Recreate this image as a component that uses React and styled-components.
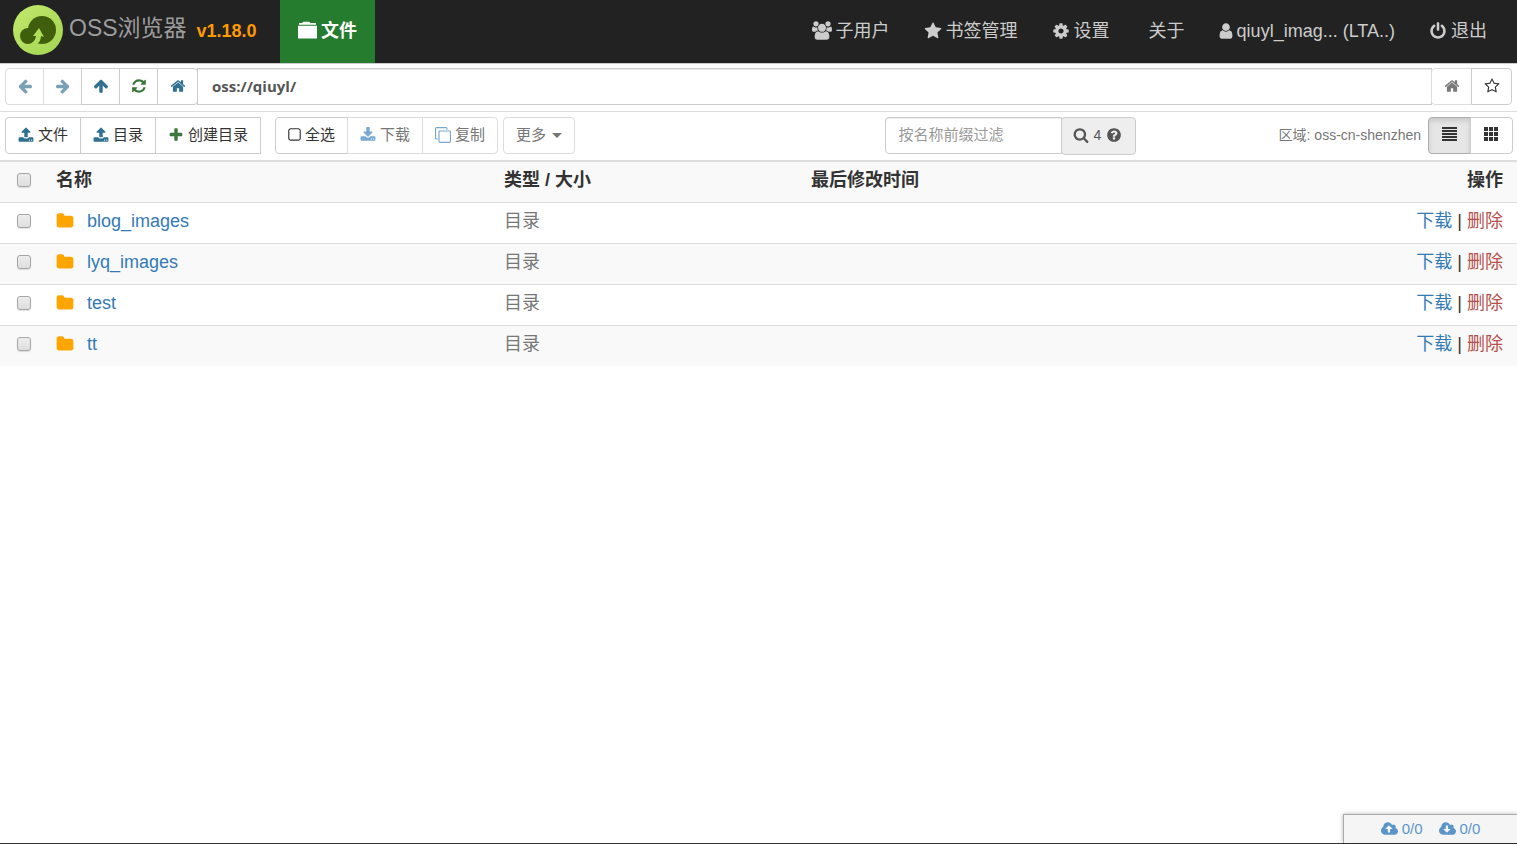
import { useState } from "react";
import styled, { createGlobalStyle, css } from "styled-components";

const ICONS = {
  arrowLeft: "M1664 896v128q0 53-32.5 90.5t-84.5 37.5h-704l293 294q38 36 38 90t-38 90l-75 76q-37 37-90 37-52 0-91-37l-651-652q-37-37-37-90 0-52 37-91l651-650q38-38 91-38 52 0 90 38l75 74q38 38 38 91t-38 91l-293 293h704q52 0 84.5 37.5t32.5 90.5z",
  arrowRight: "M1600 960q0 54-37 91l-651 651q-39 37-91 37-51 0-90-37l-75-75q-38-38-38-91t38-91l293-293h-704q-52 0-84.5-37.5t-32.5-90.5v-128q0-53 32.5-90.5t84.5-37.5h704l-293-294q-38-36-38-90t38-90l75-75q38-38 90-38 53 0 91 38l651 651q37 35 37 90z",
  arrowUp: "M1675 971q0 51-37 90l-75 75q-38 38-91 38-54 0-90-38l-294-293v704q0 52-37.5 84.5t-90.5 32.5h-128q-53 0-90.5-32.5t-37.5-84.5v-704l-294 293q-36 38-90 38t-90-38l-75-75q-38-38-38-90 0-53 38-91l651-651q35-37 90-37 54 0 91 37l651 651q37 39 37 91z",
  refresh: "M1639 1056q0 5-1 7-64 268-268 434.5t-478 166.5q-146 0-282.5-55t-243.5-157l-129 129q-19 19-45 19t-45-19-19-45v-448q0-26 19-45t45-19h448q26 0 45 19t19 45-19 45l-137 137q71 66 161 102t187 36q134 0 250-65t186-179q11-17 53-117 8-23 30-23h192q13 0 22.5 9.5t9.5 22.5zm25-800v448q0 26-19 45t-45 19h-448q-26 0-45-19t-19-45 19-45l138-138q-148-137-349-137-134 0-250 65t-186 179q-11 17-53 117-8 23-30 23h-199q-13 0-22.5-9.5t-9.5-22.5v-7q65-268 270-434.5t480-166.5q146 0 284 55.5t245 156.5l130-129q19-19 45-19t45 19 19 45z",
  home: "M1472 992v480q0 26-19 45t-45 19h-384v-384h-256v384h-384q-26 0-45-19t-19-45v-480q0-1 .5-3t.5-3l575-474 575 474q1 2 1 6zm223-69l-62 74q-8 9-21 11h-3q-13 0-21-7l-692-577-692 577q-12 8-24 7-13-2-21-11l-62-74q-8-10-7-23.5t11-21.5l719-599q32-26 76-26t76 26l244 204v-195q0-14 9-23t23-9h192q14 0 23 9t9 23v408l219 182q10 8 11 21.5t-7 23.5z",
  star: "M1728 647q0 22-26 48l-363 354 86 500q1 7 1 20 0 21-10.5 35.5t-30.5 14.5q-19 0-40-12l-449-236-449 236q-22 12-40 12-21 0-31.5-14.5t-10.5-35.5q0-6 2-20l86-500-364-354q-25-27-25-48 0-37 56-46l502-73 225-455q19-41 49-41t49 41l225 455 502 73q56 9 56 46z",
  starO: "M1201 1004l306-297-422-62-189-382-189 382-422 62 306 297-73 421 378-199 377 199zm527-357q0 22-26 48l-363 354 86 500q1 7 1 20 0 50-41 50-19 0-40-12l-449-236-449 236q-22 12-40 12-21 0-31.5-14.5t-10.5-35.5q0-6 2-20l86-500-364-354q-25-27-25-48 0-37 56-46l502-73 225-455q19-41 49-41t49 41l225 455 502 73q56 9 56 46z",
  upload: "M1344 1472q0-26-19-45t-45-19-45 19-19 45 19 45 45 19 45-19 19-45zm256 0q0-26-19-45t-45-19-45 19-19 45 19 45 45 19 45-19 19-45zm128-224v320q0 40-28 68t-68 28h-1472q-40 0-68-28t-28-68v-320q0-40 28-68t68-28h427q21 56 70.5 92t110.5 36h256q61 0 110.5-36t70.5-92h427q40 0 68 28t28 68zm-325-648q-17 40-59 40h-256v448q0 26-19 45t-45 19h-256q-26 0-45-19t-19-45v-448h-256q-42 0-59-40-17-39 14-69l448-448q18-19 45-19t45 19l448 448q31 30 14 69z",
  download: "M1344 1344q0-26-19-45t-45-19-45 19-19 45 19 45 45 19 45-19 19-45zm256 0q0-26-19-45t-45-19-45 19-19 45 19 45 45 19 45-19 19-45zm128-224v320q0 40-28 68t-68 28h-1472q-40 0-68-28t-28-68v-320q0-40 28-68t68-28h465l135 136q58 56 136 56t136-56l136-136h464q40 0 68 28t28 68zm-325-569q17 41-14 70l-448 448q-18 19-45 19t-45-19l-448-448q-31-29-14-70 17-39 59-39h256v-448q0-26 19-45t45-19h256q26 0 45 19t19 45v448h256q42 0 59 39z",
  plus: "M1600 736v192q0 40-28 68t-68 28h-416v416q0 40-28 68t-68 28h-192q-40 0-68-28t-28-68v-416h-416q-40 0-68-28t-28-68v-192q0-40 28-68t68-28h416v-416q0-40 28-68t68-28h192q40 0 68 28t28 68v416h416q40 0 68 28t28 68z",
  cog: "M1152 896q0-106-75-181t-181-75-181 75-75 181 75 181 181 75 181-75 75-181zm512-109v222q0 12-8 23t-20 13l-185 28q-19 54-39 91 35 50 107 138 10 12 10 25t-9 23q-27 37-99 108t-94 71q-12 0-26-9l-138-108q-44 23-91 38-16 136-29 186-7 28-36 28h-222q-14 0-24.5-8.5t-11.5-21.5l-28-184q-49-16-90-37l-141 107q-10 9-25 9-14 0-25-11-126-114-165-168-7-10-7-23 0-12 8-23 15-21 51-66.5t54-70.5q-27-50-41-99l-183-27q-13-2-21-12.5t-8-23.5v-222q0-12 8-23t19-13l186-28q14-46 39-92-40-57-107-138-10-12-10-24 0-10 9-23 26-36 98.5-107.5t94.5-71.5q13 0 26 10l138 107q44-23 91-38 16-136 29-186 7-28 36-28h222q14 0 24.5 8.5t11.5 21.5l28 184q49 16 90 37l142-107q9-9 24-9 13 0 25 10 129 119 165 170 7 8 7 22 0 12-8 23-15 21-51 66.5t-54 70.5q26 50 41 98l183 28q13 2 21 12.5t8 23.5z",
  power: "M1664 896q0 156-61 298t-164 245-245 164-298 61-298-61-245-164-164-245-61-298q0-182 80.5-343t226.5-270q43-32 95.5-25t83.5 50q32 42 24.5 94.5t-49.5 84.5q-98 74-151.5 181t-53.5 228q0 104 40.5 198.5t109.5 163.5 163.5 109.5 198.5 40.5 198.5-40.5 163.5-109.5 109.5-163.5 40.5-198.5q0-121-53.5-228t-151.5-181q-42-32-49.5-84.5t24.5-94.5q31-43 84-50t95 25q146 109 226.5 270t80.5 343zm-640-768v640q0 52-38 90t-90 38-90-38-38-90v-640q0-52 38-90t90-38 90 38 38 90z",
  user: "M1536 1399q0 109-62.5 187t-150.5 78h-854q-88 0-150.5-78t-62.5-187q0-85 8.5-160.5t31.5-152 58.5-131 94-89 134.5-34.5q131 128 313 128t313-128q76 0 134.5 34.5t94 89 58.5 131 31.5 152 8.5 160.5zm-256-887q0 159-112.5 271.5t-271.5 112.5-271.5-112.5-112.5-271.5 112.5-271.5 271.5-112.5 271.5 112.5 112.5 271.5z",
  users: "M657 896q-162 5-265 128h-134q-82 0-138-40.5t-56-118.5q0-353 124-353 6 0 43.5 21t97.5 42.5 119 21.5q67 0 133-23-5 37-5 66 0 139 81 256zm1071 637q0 120-73 189.5t-194 69.5h-874q-121 0-194-69.5t-73-189.5q0-53 3.5-103.5t14-109 26.5-108.5 43-97.5 62-81 85.5-53.5 111.5-20q10 0 43 21.5t73 48 107 48 135 21.5 135-21.5 107-48 73-48 43-21.5q61 0 111.5 20t85.5 53.5 62 81 43 97.5 26.5 108.5 14 109 3.5 103.5zm-1024-1277q0 106-75 181t-181 75-181-75-75-181 75-181 181-75 181 75 75 181zm704 384q0 159-112.5 271.5t-271.5 112.5-271.5-112.5-112.5-271.5 112.5-271.5 271.5-112.5 271.5 112.5 112.5 271.5zm576 225q0 78-56 118.5t-138 40.5h-134q-103-123-265-128 81-117 81-256 0-29-5-66 66 23 133 23 59 0 119-21.5t97.5-42.5 43.5-21q124 0 124 353zm-128-609q0 106-75 181t-181 75-181-75-75-181 75-181 181-75 181 75 75 181z",
  folder: "M1728 608v704q0 92-66 158t-158 66h-1216q-92 0-158-66t-66-158v-960q0-92 66-158t158-66h320q92 0 158 66t66 158v32h672q92 0 158 66t66 158z",
  square: "M1312 256h-832q-66 0-113 47t-47 113v832q0 66 47 113t113 47h832q66 0 113-47t47-113v-832q0-66-47-113t-113-47zm288 160v832q0 119-84.5 203.5t-203.5 84.5h-832q-119 0-203.5-84.5t-84.5-203.5v-832q0-119 84.5-203.5t203.5-84.5h832q119 0 203.5 84.5t84.5 203.5z",
  clone: "M1664 1632v-1088q0-13-9.5-22.5t-22.5-9.5h-1088q-13 0-22.5 9.5t-9.5 22.5v1088q0 13 9.5 22.5t22.5 9.5h1088q13 0 22.5-9.5t9.5-22.5zm128-1088v1088q0 66-47 113t-113 47h-1088q-66 0-113-47t-47-113v-1088q0-66 47-113t113-47h1088q66 0 113 47t47 113zm-384-384v160h-128v-160q0-13-9.5-22.5t-22.5-9.5h-1088q-13 0-22.5 9.5t-9.5 22.5v1088q0 13 9.5 22.5t22.5 9.5h160v128h-160q-66 0-113-47t-47-113v-1088q0-66 47-113t113-47h1088q66 0 113 47t47 113z",
  search: "M1216 832q0-185-131.5-316.5t-316.5-131.5-316.5 131.5-131.5 316.5 131.5 316.5 316.5 131.5 316.5-131.5 131.5-316.5zm512 832q0 52-38 90t-90 38q-54 0-90-38l-343-342q-179 124-399 124-143 0-273.5-55.5t-225-150-150-225-55.5-273.5 55.5-273.5 150-225 225-150 273.5-55.5 273.5 55.5 225 150 150 225 55.5 273.5q0 220-124 399l343 343q37 37 37 90z",
  question: "M1024 1376v-192q0-14-9-23t-23-9h-192q-14 0-23 9t-9 23v192q0 14 9 23t23 9h192q14 0 23-9t9-23zm256-672q0-88-55.5-163t-138.5-116-170-41q-243 0-371 213-15 24 8 42l132 100q7 6 19 6 16 0 25-12 53-68 86-92 34-24 86-24 48 0 85.5 26t37.5 59q0 38-20 61t-68 45q-63 28-115.5 86.5t-52.5 125.5v36q0 14 9 23t23 9h192q14 0 23-9t9-23q0-19 21.5-49.5t54.5-49.5q32-18 49-28.5t46-35 44.5-48 28-60.5 12.5-81zm384 192q0 209-103 385.5t-279.5 279.5-385.5 103-385.5-103-279.5-279.5-103-385.5 103-385.5 279.5-279.5 385.5-103 385.5 103 279.5 279.5 103 385.5z",
  cloudUp: "M1344 864q0-14-9-23l-352-352q-9-9-23-9t-23 9l-351 351q-10 12-10 24 0 14 9 23t23 9h224v352q0 13 9.5 22.5t22.5 9.5h192q13 0 22.5-9.5t9.5-22.5v-352h224q13 0 22.5-9.5t9.5-22.5zm640 288q0 159-112.5 271.5t-271.5 112.5h-1088q-185 0-316.5-131.5t-131.5-316.5q0-130 70-240t188-165q-2-30-2-43 0-212 150-362t362-150q156 0 285.5 87t188.5 231q71-62 166-62 106 0 181 75t75 181q0 76-41 138 130 31 213.5 135.5t83.5 238.5z",
  cloudDown: "M1344 928q0-14-9-23t-23-9h-224v-352q0-13-9.5-22.5t-22.5-9.5h-192q-13 0-22.5 9.5t-9.5 22.5v352h-224q-13 0-22.5 9.5t-9.5 22.5q0 14 9 23l352 352q9 9 23 9t23-9l351-351q10-12 10-24zm640 224q0 159-112.5 271.5t-271.5 112.5h-1088q-185 0-316.5-131.5t-131.5-316.5q0-130 70-240t188-165q-2-30-2-43 0-212 150-362t362-150q156 0 285.5 87t188.5 231q71-62 166-62 106 0 181 75t75 181q0 76-41 138 130 31 213.5 135.5t83.5 238.5z",
  tab: "M0 450h1792v1200h-1792zM90 360v-90q0-70 70-70h230l110-130h560l110 130h460q70 0 70 70v90z",
  list: "M0 0h15v2h-15zM0 3h15v2h-15zM0 6h15v2h-15zM0 9h15v2h-15zM0 12h15v2h-15z",
  grid: "M0 0h4v4h-4zM5 0h4v4h-4zM10 0h4v4h-4zM0 5h4v4h-4zM5 5h4v4h-4zM10 5h4v4h-4zM0 10h4v4h-4zM5 10h4v4h-4zM10 10h4v4h-4z",
};

// glyphs that do not fill the usual square box: [viewBox, width offset]
const BOXES = {
  users: ["64 0 1920 1792", 1],
  cloudUp: ["64 0 1920 1792", 1],
  cloudDown: ["64 0 1920 1792", 1],
  user: ["200 0 1394 1792", -4],
  square: ["168 0 1456 1792", -3],
  list: ["0 0 15 15", 0],
  grid: ["0 0 15 15", 0],
};

const FILES = ["blog_images", "lyq_images", "test", "tt"];

function Icon ({name, size = 16, color}) {
  const [box, offset] = BOXES[name] || ["0 0 1792 1792", 0];
  return (
    <IconSvg viewBox={box} $width={size + offset} $height={size} $color={color} aria-hidden="true">
      <path d={ICONS[name]} />
    </IconSvg>
  )
}

function Logo () {
  return (
    <LogoSvg viewBox="0 0 50 50" aria-hidden="true">
      <defs>
        <linearGradient id="logoFill" x1="0" y1="0" x2="1" y2="1">
          <stop offset="0" stopColor="#C3E86C" />
          <stop offset="1" stopColor="#A2D552" />
        </linearGradient>
      </defs>
      <circle cx="25" cy="25" r="25" fill="url(#logoFill)" />
      <circle cx="29" cy="25" r="14" fill="#3F5F0C" />
      <circle cx="15" cy="31" r="8" fill="#3F5F0C" />
      <path d="M26 23l5 9-3-1q0 5-4 8h-7q5-2 6-8h-3z" fill="#AFDD5C" />
    </LogoSvg>
  )
}

function App () {
  const [checked, setChecked] = useState([]);
  const [path, setPath] = useState("oss://qiuyl/");
  const [filter, setFilter] = useState("");
  const [view, setView] = useState("list");

  const isAll = checked.length === FILES.length;

  const toggleAll = () => setChecked(isAll ? [] : FILES);
  const toggle = (name) => {
    setChecked(current => current.includes(name) ? current.filter(v => v !== name) : [...current, name]);
  }

  return (
    <Page>
      <GlobalStyle />
      <Header>
        <Brand>
          <Logo />
          <BrandName>OSS浏览器</BrandName>
          <Version>v1.18.0</Version>
        </Brand>
        <Tab href="#files"><Icon name="tab" size={19} />文件</Tab>
        <Nav>
          <NavLink href="#users"><Icon name="users" size={19} />子用户</NavLink>
          <NavLink href="#bookmarks"><Icon name="star" size={18} />书签管理</NavLink>
          <NavLink href="#settings"><Icon name="cog" size={18} />设置</NavLink>
          <NavLink href="#about" $plain>关于</NavLink>
          <NavLink href="#account"><Icon name="user" size={18} />qiuyl_imag... (LTA..)</NavLink>
          <NavLink href="#logout"><Icon name="power" size={18} />退出</NavLink>
        </Nav>
      </Header>

      <AddressBar>
        <Group>
          <Button $width={39} disabled aria-label="后退"><Icon name="arrowLeft" color="#31708F" /></Button>
          <Button $width={39} disabled aria-label="前进"><Icon name="arrowRight" color="#31708F" /></Button>
          <Button $width={39} aria-label="上级"><Icon name="arrowUp" color="#31708F" /></Button>
          <Button $width={39} aria-label="刷新"><Icon name="refresh" color="#3C763D" /></Button>
          <Button $width={41} aria-label="首页"><Icon name="home" color="#31708F" /></Button>
        </Group>
        <AddressInput aria-label="地址" value={path} onChange={e => setPath(e.target.value)} />
        <Group>
          <Button $width={41} disabled aria-label="设为首页"><Icon name="home" color="#333333" /></Button>
          <Button $width={41} aria-label="收藏"><Icon name="starO" /></Button>
        </Group>
      </AddressBar>

      <Toolbar>
        <Group $flatEnd>
          <Button><Icon name="upload" color="#31708F" />文件</Button>
          <Button><Icon name="upload" color="#31708F" />目录</Button>
          <Button><Icon name="plus" color="#3C763D" />创建目录</Button>
        </Group>
        <ActionGroups>
          <Group>
            <Button onClick={toggleAll}><Icon name="square" />全选</Button>
            <Button disabled><Icon name="download" color="#337AB7" />下载</Button>
            <Button disabled><Icon name="clone" color="#337AB7" />复制</Button>
          </Group>
          <Group>
            <Button disabled>更多<Caret /></Button>
          </Group>
        </ActionGroups>
        <ToolbarRight>
          <Filter>
            <FilterInput
              aria-label="按名称前缀过滤"
              placeholder="按名称前缀过滤"
              value={filter}
              onChange={e => setFilter(e.target.value)}
            />
            <FilterAddon><Icon name="search" />4<Icon name="question" /></FilterAddon>
          </Filter>
          <Region>区域: oss-cn-shenzhen</Region>
          <Group>
            <Button $width={43} $active={view === "list"} onClick={() => setView("list")} aria-label="列表"><Icon name="list" size={15} /></Button>
            <Button $width={43} $active={view === "grid"} onClick={() => setView("grid")} aria-label="图标"><Icon name="grid" size={15} /></Button>
          </Group>
        </ToolbarRight>
      </Toolbar>

      <Table>
        <colgroup>
          <CheckCol />
          <NameCol />
          <TypeCol />
          <TimeCol />
          <col />
        </colgroup>
        <thead>
          <Row>
            <HeadCell><CheckBox type="checkbox" aria-label="全选" checked={isAll} onChange={toggleAll} /></HeadCell>
            <HeadCell>名称</HeadCell>
            <HeadCell>类型 / 大小</HeadCell>
            <HeadCell>最后修改时间</HeadCell>
            <HeadCell $end>操作</HeadCell>
          </Row>
        </thead>
        <tbody>
          {
            FILES.map(name => (
              <Row key={name}>
                <Cell>
                  <CheckBox type="checkbox" aria-label={name} checked={checked.includes(name)} onChange={() => toggle(name)} />
                </Cell>
                <Cell>
                  <FileName><Icon name="folder" size={18} color="#FFA500" /><Link href={`#${name}`}>{name}</Link></FileName>
                </Cell>
                <Cell $muted>目录</Cell>
                <Cell />
                <Cell $end><Link href="#download">下载</Link> | <Link href="#delete" $danger>删除</Link></Cell>
              </Row>
            ))
          }
        </tbody>
      </Table>

      <Transfer>
        <TransferLink href="#uploads"><Icon name="cloudUp" />0/0</TransferLink>
        <TransferLink href="#downloads"><Icon name="cloudDown" />0/0</TransferLink>
      </Transfer>
    </Page>
  )
}

const GlobalStyle = createGlobalStyle`
  * {
    box-sizing: border-box;
  }

  body {
    margin: 0;
    background: #FFFFFF;
    color: #333333;
    font: 18px/24px "Liberation Sans", "Noto Sans CJK SC", sans-serif;
  }

  button, input {
    font-family: inherit;
  }
`;

const Page = styled.div`
  display: flex;
  flex-direction: column;
  min-height: 100vh;
  border-bottom: 1px solid #333333;
`;

const IconSvg = styled.svg`
  flex: none;
  width: ${props => props.$width}px;
  height: ${props => props.$height}px;
  fill: ${props => props.$color || "currentColor"};
`;

const LogoSvg = styled.svg`
  width: 50px;
  height: 50px;
  margin-right: 6px;
`;

const Header = styled.header`
  display: flex;
  height: 64px;
  background: #222222;
  border-bottom: 1px solid #CCCCCC;
`;

const Brand = styled.div`
  display: flex;
  align-items: center;
  width: 280px;
  padding: 0 0 4px 13px;
`;

const BrandName = styled.span`
  padding-bottom: 4px;
  color: #9D9D9D;
  font-size: 23px;
`;

const Version = styled.span`
  margin: 2px 0 0 10px;
  color: #FF9900;
  font-size: 18px;
  font-weight: bold;
`;

const Tab = styled.a`
  display: flex;
  align-items: center;
  gap: 4px;
  padding: 0 18px 2px;
  background: #257B2E;
  color: #FFFFFF;
  font-weight: bold;
  text-decoration: none;
`;

const Nav = styled.nav`
  display: flex;
  margin-left: auto;
  padding-right: 13px;
`;

const NavLink = styled.a`
  display: flex;
  align-items: center;
  gap: 4px;
  padding: 0 17px 2px ${props => props.$plain ? 22 : 17}px;
  color: #CCCCCC;
  text-decoration: none;
`;

const AddressBar = styled.div`
  display: flex;
  align-items: flex-start;
  height: 48px;
  padding: 4px 5px;
  border-bottom: 1px solid #DDDDDD;
`;

const Toolbar = styled.div`
  display: flex;
  align-items: flex-start;
  height: 48px;
  padding: 5px 4px 5px 5px;
`;

const Button = styled.button`
  display: flex;
  align-items: center;
  justify-content: center;
  gap: 4px;
  height: 37px;
  padding: 0 12px 4px;
  border: 1px solid #CCCCCC;
  background: #FFFFFF;
  color: #333333;
  font-size: 15px;
  white-space: nowrap;
  cursor: pointer;

  svg {
    margin-top: 2px;
  }

  ${props => props.$width && css`
    width: ${props.$width}px;
    padding: 0 0 4px;
  `}

  ${props => props.$active && css`
    background: #E6E6E6;
    border-color: #ADADAD;
    box-shadow: inset 0 3px 5px rgba(0, 0, 0, .125);
  `}

  &:disabled {
    border-color: #DDDDDD;
    color: #777777;
    cursor: not-allowed;
  }

  &:disabled svg {
    opacity: .65;
  }
`;

const Group = styled.div`
  display: flex;

  ${Button} + ${Button} {
    margin-left: -1px;
  }

  ${Button}:first-child {
    border-radius: 4px 0 0 4px;
  }

  ${Button}:last-child {
    border-radius: ${props => props.$flatEnd ? "0" : "0 4px 4px 0"};
  }

  ${Button}:only-child {
    border-radius: 4px;
  }
`;

const AddressInput = styled.input`
  flex: 1;
  min-width: 0;
  height: 37px;
  margin: 0 -1px;
  padding: 0 14px 2px;
  border: 1px solid #CCCCCC;
  box-shadow: inset 0 1px 1px rgba(0, 0, 0, .075);
  color: #555555;
  font: bold 15px "Open Sans", sans-serif;
  outline: 0;
`;

const ActionGroups = styled.div`
  display: flex;
  gap: 5px;
  margin-left: 14px;
`;

const Caret = styled.span`
  margin: 4px 0 0 2px;
  border: 5px solid transparent;
  border-top-color: currentColor;
  border-bottom: 0;
`;

const ToolbarRight = styled.div`
  display: flex;
  align-items: flex-start;
  margin-left: auto;
`;

const Filter = styled.div`
  display: flex;
  margin-right: 143px;
`;

const FilterInput = styled.input`
  width: 177px;
  height: 37px;
  padding: 0 13px 2px;
  border: 1px solid #CCCCCC;
  border-radius: 4px 0 0 4px;
  box-shadow: inset 0 1px 1px rgba(0, 0, 0, .075);
  color: #555555;
  font-size: 15px;
  outline: 0;

  &::placeholder {
    color: #999999;
  }
`;

const FilterAddon = styled.span`
  display: flex;
  align-items: center;
  gap: 5px;
  width: 75px;
  height: 38px;
  margin-left: -1px;
  padding: 0 11px 2px;
  border: 1px solid #CCCCCC;
  border-radius: 4px;
  background: #EEEEEE;
  color: #555555;
  font-size: 14px;
`;

const Region = styled.span`
  margin-right: 7px;
  color: #777777;
  font-size: 14px;
  line-height: 37px;
`;

const Table = styled.table`
  width: 100%;
  border-collapse: collapse;
  border-top: 2px solid #DDDDDD;
  table-layout: fixed;
`;

const CheckCol = styled.col`
  width: 48px;
`;

const NameCol = styled.col`
  width: 448px;
`;

const TypeCol = styled.col`
  width: 307px;
`;

const TimeCol = styled.col`
  width: 400px;
`;

const Row = styled.tr`
  height: 41px;
  border-top: 1px solid #DDDDDD;

  thead &, tbody &:nth-child(even) {
    background: #F9F9F9;
  }
`;

const cell = css`
  padding: 0 14px 4px 8px;
  text-align: ${props => props.$end ? "right" : "left"};

  &:first-child {
    padding: 0 0 4px 17px;
  }
`;

const HeadCell = styled.th`
  ${cell}
  font-weight: bold;
`;

const Cell = styled.td`
  ${cell}
  color: ${props => props.$muted ? "#777777" : "#333333"};
`;

const FileName = styled.span`
  display: flex;
  align-items: center;
  gap: 13px;
`;

const Link = styled.a`
  color: ${props => props.$danger ? "#B5504E" : "#337AB7"};
  text-decoration: none;
`;

const CheckBox = styled.input`
  display: block;
  appearance: none;
  width: 14px;
  height: 14px;
  margin: 0;
  border: 1px solid #A5A5A5;
  border-radius: 3px;
  background: linear-gradient(#EDEDED, #DEDEDE);
  box-shadow: 0 1px 1px rgba(0, 0, 0, .12);

  &:checked {
    background: #337AB7;
  }
`;

const Transfer = styled.div`
  display: flex;
  align-items: center;
  justify-content: center;
  gap: 16px;
  width: 174px;
  height: 29px;
  margin: auto 0 0 auto;
  border: solid #AAAAAA;
  border-width: 1px 0 0 1px;
  background: #F5F5F5;
  box-shadow: 0 0 4px rgba(0, 0, 0, .3);
`;

const TransferLink = styled.a`
  display: flex;
  align-items: center;
  gap: 4px;
  color: #5A95C9;
  font-size: 15px;
  text-decoration: none;
`;

export default App;
